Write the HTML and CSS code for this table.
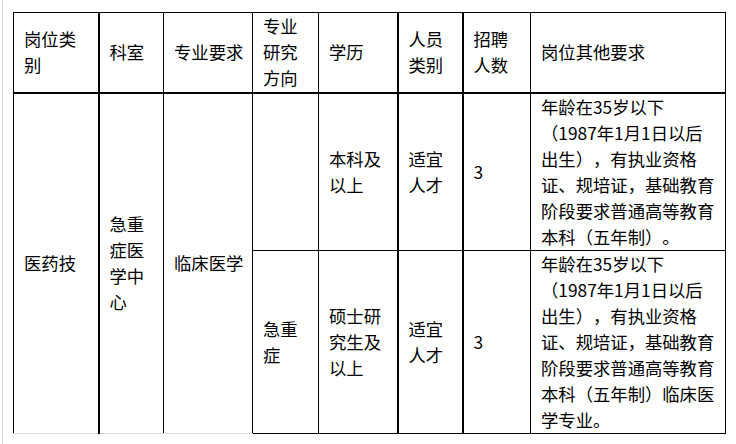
FILE: index.html
```html
<!DOCTYPE html>
<html lang="zh-CN">
<head>
<meta charset="utf-8">
<title>岗位表</title>
<link rel="stylesheet" href="styles.css">
</head>
<body>
<div class="page">
  <table class="jobs">
    <colgroup>
      <col class="c1"><col class="c2"><col class="c3"><col class="c4">
      <col class="c5"><col class="c6"><col class="c7"><col class="c8">
    </colgroup>
    <tr class="head">
      <td>岗位类别</td>
      <td class="thick-l">科室</td>
      <td>专业要求</td>
      <td>专业研究方向</td>
      <td>学历</td>
      <td class="thick-l">人员类别</td>
      <td class="thick-l">招聘人数</td>
      <td>岗位其他要求</td>
    </tr>
    <tr class="row1">
      <td rowspan="2" class="open-b">医药技</td>
      <td rowspan="2" class="thick-l open-b">急重症医学中心</td>
      <td rowspan="2" class="open-b">临床医学</td>
      <td></td>
      <td>本科及以上</td>
      <td class="thick-l">适宜人才</td>
      <td class="thick-l">3</td>
      <td>年龄在35岁以下<br>（1987年1月1日以后<br>出生），有执业资格<br>证、规培证，基础教育<br>阶段要求普通高等教育<br>本科（五年制）。</td>
    </tr>
    <tr class="row2">
      <td>急重症</td>
      <td>硕士研究生及以上</td>
      <td class="thick-l">适宜人才</td>
      <td class="thick-l">3</td>
      <td>年龄在35岁以下<br>（1987年1月1日以后<br>出生），有执业资格<br>证、规培证，基础教育<br>阶段要求普通高等教育<br>本科（五年制）临床医<br>学专业。</td>
    </tr>
  </table>
</div>
</body>
</html>
```

FILE: styles.css
```css
html, body {
  margin: 0;
  padding: 0;
  background: #ffffff;
}

.page {
  margin-left: 2px;
  border-left: 1px solid #d9d9d9;
  height: 444px;
  box-sizing: border-box;
  padding: 12px 0 0 10px;
}

.jobs {
  border-collapse: collapse;
  table-layout: fixed;
  width: 713px;
  font-family: "Noto Sans CJK SC", "Noto Sans", sans-serif;
  font-size: 17.33px;
  line-height: 26px;
  color: #000000;
  text-spacing-trim: space-all;
  text-autospace: no-autospace;
}

.c1 { width: 85px; }
.c2 { width: 65px; }
.c3 { width: 89px; }
.c4 { width: 66px; }
.c5 { width: 79px; }
.c6 { width: 65px; }
.c7 { width: 68px; }
.c8 { width: 195px; }

.jobs td {
  border: 1px solid #000000;
  padding: 0 7px 0 10px;
  vertical-align: middle;
  text-align: left;
}

.jobs td.thick-l {
  border-left-width: 2px;
}

.jobs .head td {
  border-bottom-width: 2px;
}

.jobs td.open-b {
  border-bottom-color: #d9d9d9;
}

.head { height: 80px; }
.row1 { height: 157px; }
.row2 { height: 183px; }
```
